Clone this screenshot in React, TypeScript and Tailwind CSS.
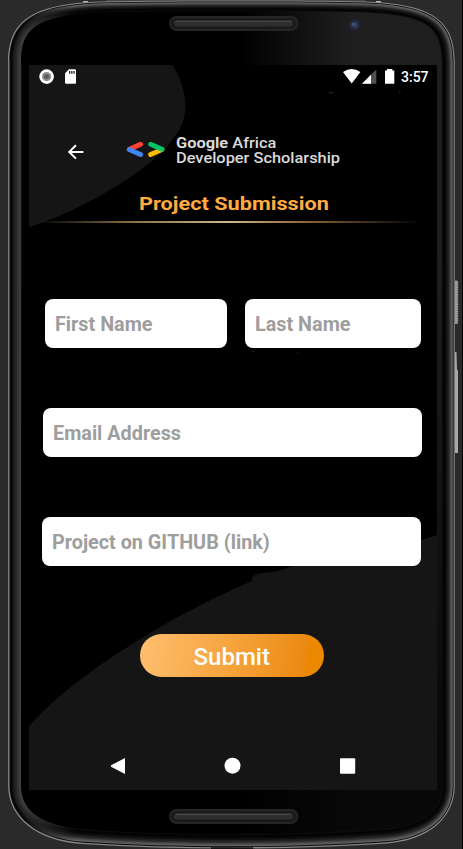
import React from "react";

const outline = (i: number) => {
  const l = 8.2 + i;
  const r = 454.8 - i;
  const t = i * 0.82;
  const b = 849 - i * 1.12;
  const k = i * 0.45;
  return [
    `M${l} 62`,
    `C${l} ${21 + k} ${32 + k} ${4 + t} ${100 + k} ${1.6 + t}`,
    `C150 ${0.6 + t} 190 ${0.6 + t} 231 ${0.6 + t}`,
    `C280 ${0.6 + t} 320 ${0.6 + t} ${365 - k} ${1.6 + t}`,
    `C${432 - k} ${4 + t} ${r} ${20 + k} ${r} 62`,
    `V786`,
    `C${r} ${815 - k} ${432 - k} ${b - 7} ${380 - k} ${b - 5}`,
    `C330 ${b - 2} 280 ${b - 0.5} 231 ${b - 0.5}`,
    `C180 ${b - 0.5} 130 ${b - 2} ${82 + k} ${b - 5}`,
    `C${36 + k} ${b - 8} ${l} ${817 - k} ${l} 786Z`,
  ].join(" ");
};

const layers = [
  { i: 0, left: "#8c8c8c", base: "#858585" },
  { i: 1.2, left: "#161616", base: "#080808" },
  { i: 2, left: "#040404", base: "#606060" },
  { i: 3, left: "#070707", base: "#535353" },
  { i: 4, left: "#121212", base: "#424242" },
  { i: 5, left: "#1b1b1b", base: "#2f2f2f" },
  { i: 6, left: "#222222", base: "#1f1f1f" },
  { i: 7.5, left: "#292929", base: "#101010" },
  { i: 9, left: "#333333", base: "#070707" },
  { i: 10.5, left: "#3c3c3c", base: "#020202" },
  { i: 11.8, left: "#3c3c3c", base: "#0b0b0b" },
];

function Speaker({ y }: { y: number }) {
  return (
    <g>
      <rect x="169" y={y} width="129.5" height="15" rx="7.5" fill="#252525" />
      <rect x="171" y={y + 2} width="125.5" height="11" rx="5.5" fill="#1a1a1a" />
      <rect x="174" y={y + 4} width="119" height="6.5" rx="3.2" fill="#2e2e2e" />
      <rect x="176" y={y + 5} width="115" height="1" fill="#484848" />
    </g>
  );
}

function Device() {
  return (
    <svg className="absolute inset-0" width="463" height="849" viewBox="0 0 463 849" aria-hidden="true">
      <defs>
        {layers.map((l, n) => (
          <linearGradient key={n} id={`edge${n}`} gradientUnits="userSpaceOnUse" x1="22" y1="0" x2="75" y2="0">
            <stop offset="0" stopColor={l.left} />
            <stop offset="1" stopColor={l.base} />
          </linearGradient>
        ))}
        <linearGradient id="gloss" gradientUnits="userSpaceOnUse" x1="240" y1="0" x2="350" y2="0">
          <stop offset="0" stopColor="#000" />
          <stop offset="1" stopColor="#1e1e1e" />
        </linearGradient>
        <linearGradient id="fade" gradientUnits="userSpaceOnUse" x1="0" y1="250" x2="0" y2="760">
          <stop offset="0" stopColor="#000" stopOpacity="0" />
          <stop offset="1" stopColor="#000" stopOpacity="0.75" />
        </linearGradient>
        <radialGradient id="lens">
          <stop offset="0" stopColor="#3d4d78" />
          <stop offset="0.55" stopColor="#262d44" />
          <stop offset="1" stopColor="#1c1c1f" />
        </radialGradient>
      </defs>
      <path d="M106 0H365V3H106Z" fill="#444" />
      <path d="M455 280.5h2.5v43.5H455Z" fill="#999" />
      <path d="M457.6 282v41" stroke="#aaa" strokeWidth="1.2" strokeDasharray="1.4 1" />
      <path d="M455 352h1.5l.5 18h1v83h-3Z" fill="#a8a8a8" />
      {layers.map((l, n) => (
        <path key={n} d={outline(l.i)} fill={`url(#edge${n})`} />
      ))}
      <path d={outline(13)} fill="url(#gloss)" />
      <path d={outline(13)} fill="url(#fade)" />
      <path d="M83 1h5v1.5h-5ZM376 1h5v1.5h-5Z" fill="#b0b0b0" />
      <path d="M211 847.3H253V849H211Z" fill="#171717" />
      <Speaker y={16} />
      <Speaker y={809} />
      <circle cx="354.5" cy="25" r="6.5" fill="url(#lens)" />
      <circle cx="353.4" cy="24" r="1" fill="#53628c" />
      <path d="M462 0h1v849h-1Z" fill="#050505" />
    </svg>
  );
}

function Backdrop() {
  return (
    <svg className="absolute inset-0" width="408" height="725" viewBox="29 65 408 725" aria-hidden="true">
      <path d="M29 65H172.5C181 78 185.5 93 185.3 108C185 139 147 166 126 180C97 199 64 216 29 227.3Z" fill="#151515" />
      <path d="M29 726C63 689 101 663 147 635C181 614 215 597 252 581V577.5C256 573 262 573 270 572.3C280 571.5 286 568 293 566C338 553 385 547 421 540L437 535V790H29Z" fill="#151515" />
      <path d="M329 92.2l1.5.8 2.5-.5M399 92h1.5" stroke="#333" strokeWidth="1" fill="none" />
      <path d="M252 352.5v-1h2M298 353.5v-1.5" stroke="#222" strokeWidth="1" fill="none" />
    </svg>
  );
}

function StatusBar() {
  return (
    <div className="flex h-6 items-center justify-between pr-2 pl-2.5">
      <svg width="40" height="24" viewBox="39 65 40 24" aria-hidden="true">
        <circle cx="46.6" cy="76.6" r="7.3" fill="#fff" />
        <circle cx="46.6" cy="76.6" r="4.6" fill="#8e8e8e" />
        <circle cx="46.6" cy="76.6" r="2.7" fill="#606060" />
        <path d="M69 69.3h5.8q1.2 0 1.2 1.2v12q0 1.2-1.2 1.2h-8.6q-1.2 0-1.2-1.2V73.2Z" fill="#fff" />
        <path d="M69 71h1.3v2.8H69ZM71.2 71h1.3v2.8h-1.3ZM73.4 71h1.3v2.8h-1.3Z" fill="#222" />
      </svg>
      <div className="flex items-center gap-[5px]">
        <svg width="54" height="24" viewBox="342 65 54 24" aria-hidden="true">
          <path d="M343 72Q351.7 66 360.4 72L351.7 83.5Z" fill="#fff" />
          <path d="M376.3 69.5V83.7H362Z" fill="#505050" />
          <path d="M371 74.8V83.7H362Z" fill="#fff" />
          <path d="M387 69h5.3v1.5h2V83.7H385V70.5h2Z" fill="#fff" />
        </svg>
        <span className="w-7 text-sm leading-6 font-medium whitespace-nowrap text-white">3:57</span>
      </div>
    </div>
  );
}

function Field({ label, className }: { label: string; className: string }) {
  return (
    <label className={`flex h-[49.5px] items-center rounded-lg bg-white px-2.5 text-xl font-bold whitespace-nowrap text-[#9e9e9e] ${className}`}>
      <span className="origin-left translate-y-[1px] scale-x-[0.99]">{label}</span>
    </label>
  );
}

export default function App() {
  return (
    <main className="relative h-[849px] w-[463px] overflow-hidden bg-[#2a2a2a] pt-[65px] pl-[29px] font-['Roboto','Liberation_Sans',sans-serif]">
      <Device />
      <section className="relative h-[725px] w-[408px] overflow-hidden bg-black">
        <Backdrop />
        <div className="relative flex h-full flex-col">
          <StatusBar />
          <header className="mt-[47px] flex h-[30px] items-start pl-[38px]">
            <svg className="mt-2" width="18" height="17" viewBox="0 0 18 17" fill="none" stroke="#fff" strokeWidth="2" aria-hidden="true">
              <path d="M16.4 7.9H2M9 1.2 2.2 7.9l6.8 6.7" />
            </svg>
            <svg className="mt-[5px] ml-[40.5px]" width="39" height="17" viewBox="0 0 39 17" fill="none" strokeWidth="4.8" strokeLinecap="round" aria-hidden="true">
              <path d="M3.5 8.3 14.6 3.3" stroke="#ff4131" />
              <path d="M3.2 8.6 14.6 13.5" stroke="#4285f4" />
              <path d="M24.6 13.5 36 8.6" stroke="#fbbc04" />
              <path d="M24.6 3.3 36 8.3" stroke="#00c566" />
            </svg>
            <p className="ml-[11.5px] origin-left scale-x-[1.17] text-sm leading-[14.5px] font-medium whitespace-nowrap text-[#dadada]">
              <b>Google</b> Africa
              <br />
              Developer Scholarship
            </p>
          </header>
          <h1 className="mt-[26px] ml-[109.5px] w-fit origin-left scale-x-[1.205] text-lg leading-[24.5px] font-bold whitespace-nowrap text-[#ffab40]">Project Submission</h1>
          <div className="mt-1 ml-2 h-[2px] w-[384px] bg-linear-[90deg,transparent,#8b7049_25%,#cfb48f_50%,#8b6438_70%,transparent]" />
          <form className="flex flex-col" onSubmit={(e) => e.preventDefault()}>
            <div className="mt-[76px] flex gap-[18px] pl-[15.5px]">
              <Field label="First Name" className="w-[182.5px]" />
              <Field label="Last Name" className="w-[175.5px]" />
            </div>
            <Field label="Email Address" className="mt-[59.5px] ml-[13.5px] w-[379px]" />
            <Field label="Project on GITHUB (link)" className="mt-[59.5px] ml-[13px] w-[379px]" />
            <button className="mt-[67.5px] ml-[110.5px] flex h-[43.5px] w-[184.5px] items-center justify-center rounded-full bg-linear-[100deg,#ffbf70,#f29a2c_65%,#eb8a13_88%,#eb8800_90%] text-2xl font-medium text-white">
              <span className="translate-y-[1.5px]">Submit</span>
            </button>
          </form>
          <nav className="mt-auto mb-[15px] flex h-[18px] items-center pl-[81px]">
            <svg width="246" height="18" viewBox="110 757 246 18" fill="#fff" aria-hidden="true">
              <path d="M125 758v16l-13.5-7.1q-1.4-.9 0-1.8Z" />
              <circle cx="232.5" cy="765.7" r="8" />
              <rect x="340" y="758.2" width="15.2" height="15.5" rx="1" />
            </svg>
          </nav>
        </div>
      </section>
    </main>
  );
}
